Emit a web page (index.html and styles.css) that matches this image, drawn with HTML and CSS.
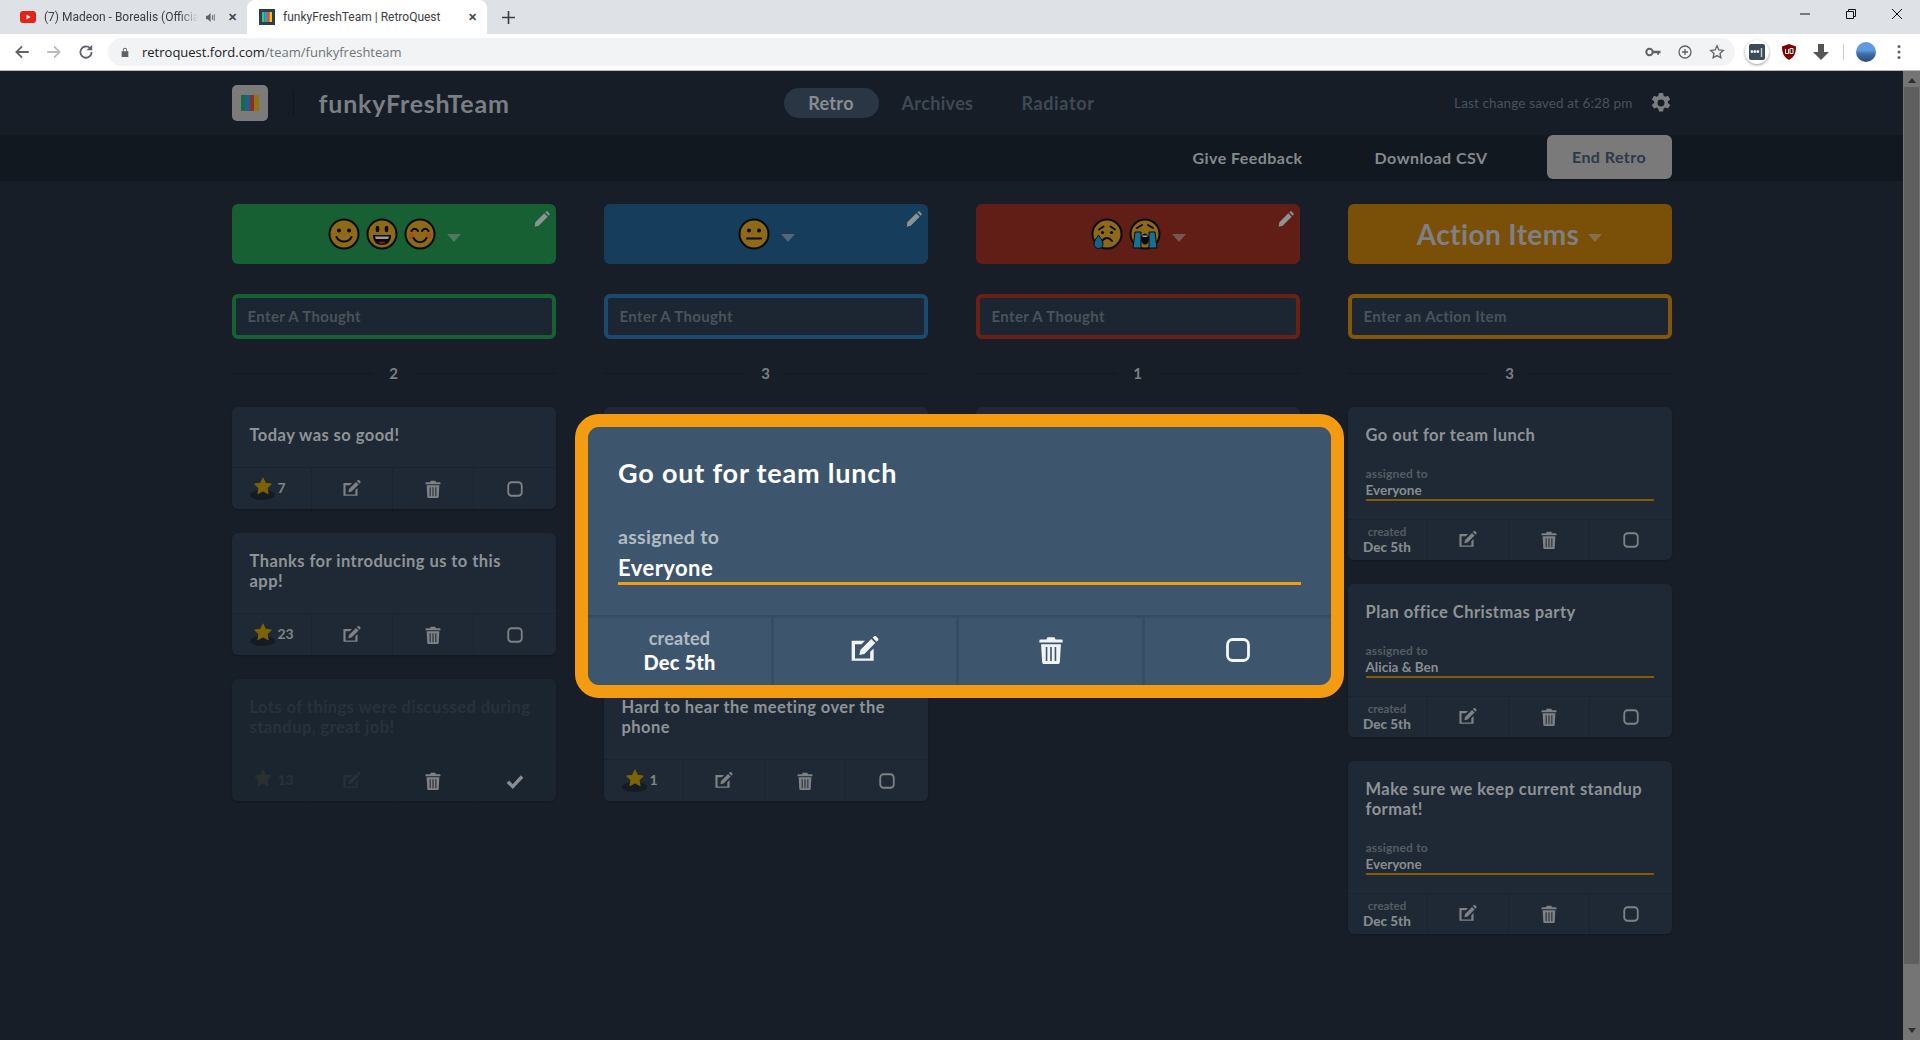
FILE: index.html
```html
<!DOCTYPE html>
<html lang="en">
<head>
<meta charset="utf-8">
<title>funkyFreshTeam | RetroQuest</title>
<link rel="stylesheet" href="styles.css">
</head>
<body>
<svg class="defs" width="0" height="0" aria-hidden="true">
  <symbol id="i-edit" viewBox="3 2 21 21"><path d="M3.500 5.500h10l-2.600 2.600H6v10.800h11.400v-5l2.600-2.600v9.200H3.500z"/><path d="M10 12.500 18.200 4.300l3 3-8.200 8.200-3.700.7zM19.200 3.300l1-1c.5-.5 1.200-.5 1.700 0l1.300 1.300c.5.500.5 1.200 0 1.700l-1 1z"/></symbol>
  <symbol id="i-trash" viewBox="0 0 24 24"><path d="M9 1h6l1 2h5a1 1 0 0 1 1 1v1.500H2V4a1 1 0 0 1 1-1h5zM3.500 7h17l-.9 15.200c0 1-.8 1.800-1.800 1.800H6.200c-1 0-1.800-.8-1.800-1.800zM7.500 9.500v12h1.400v-12zm3.800 0v12h1.400v-12zm3.800 0v12h1.400v-12z" fill-rule="evenodd"/></symbol>
  <symbol id="i-box" viewBox="0 0 24 24"><rect x="3" y="3" width="18" height="18" rx="4.500" fill="none" stroke="currentColor" stroke-width="2.400"/></symbol>
  <symbol id="i-check" viewBox="0 0 24 24"><path d="M2.500 13 9 19.500 21.500 6" fill="none" stroke="currentColor" stroke-width="4.500"/></symbol>
  <symbol id="i-star" viewBox="0 0 24 24"><path d="M12 1.500l3.300 6.900 7.500 1-5.500 5.200 1.400 7.500-6.700-3.700-6.700 3.700 1.400-7.500L1.200 9.400l7.500-1z" stroke="currentColor" stroke-width="1.500" stroke-linejoin="round"/></symbol>
  <symbol id="i-pencil" viewBox="0 0 24 24"><path d="M2 17 15.500 3.500l5 5L7 22l-6 1.500zM17 2l1.300-1.200c.6-.6 1.500-.6 2.100 0l2.800 2.800c.6.600.6 1.500 0 2.100L22 7z"/></symbol>
  <symbol id="i-gear" viewBox="0 0 24 24"><path fill-rule="evenodd" d="M9.700 1h4.600l.6 3.200 1.700 1 3.100-1.100 2.300 4-2.500 2.100v1.800l2.500 2.100-2.300 4-3.100-1.100-1.700 1-.6 3.200H9.700l-.6-3.200-1.700-1-3.100 1.100-2.300-4 2.500-2.100v-1.800L2 8.100l2.300-4 3.100 1.100 1.700-1zM12 8.200a3.800 3.800 0 1 0 0 7.600 3.800 3.800 0 0 0 0-7.600z"/></symbol>
  <symbol id="e-smile" viewBox="0 0 32 32"><circle cx="16" cy="16" r="14.500" class="face"/><circle cx="11" cy="12.500" r="2" class="ink"/><circle cx="21" cy="12.500" r="2" class="ink"/><path d="M8.500 19c3 6 12 6 15 0" class="line"/></symbol>
  <symbol id="e-grin" viewBox="0 0 32 32"><circle cx="16" cy="16" r="14.500" class="face"/><ellipse cx="11.500" cy="11" rx="1.800" ry="3.200" class="ink"/><ellipse cx="20.500" cy="11" rx="1.800" ry="3.200" class="ink"/><path d="M7 17h18c0 7-4 10-9 10s-9-3-9-10z" class="ink"/><path d="M9 18.500h14l-.8 2.500H9.800z" fill="#9a9a9a"/><path d="M12 24.500c2.500-1.500 5.500-1.500 8 0-2.500 1.500-5.500 1.500-8 0z" fill="#7d1d18"/></symbol>
  <symbol id="e-blush" viewBox="0 0 32 32"><circle cx="16" cy="16" r="14.500" class="face"/><circle cx="7.500" cy="18" r="3" fill="#a4501f"/><circle cx="24.500" cy="18" r="3" fill="#a4501f"/><path d="M7.500 13c1.500-3 5-3 6.500 0M18 13c1.500-3 5-3 6.500 0M9.500 20c3 5.500 10 5.500 13 0" class="line"/></symbol>
  <symbol id="e-neutral" viewBox="0 0 32 32"><circle cx="16" cy="16" r="14.500" class="face"/><circle cx="11" cy="12.500" r="2" class="ink"/><circle cx="21" cy="12.500" r="2" class="ink"/><path d="M9 20.500h14" class="line"/></symbol>
  <symbol id="e-sad" viewBox="0 0 32 32"><circle cx="16" cy="16" r="14.500" class="face"/><path d="M8 11.500l4.500-3M24 11.500l-4.500-3M11 23c3-4 7-4 10 0" class="line"/><circle cx="11.500" cy="14.500" r="1.600" class="ink"/><circle cx="20.500" cy="14.500" r="1.600" class="ink"/><path d="M7.500 17c-2.500 4-4.500 6-4.500 9a4.500 4.500 0 0 0 9 0c0-3-2-5-4.500-9z" fill="#17608a" stroke="#0a0a0a"/></symbol>
  <symbol id="e-cry" viewBox="0 0 32 32"><circle cx="16" cy="16" r="14.500" class="face"/><path d="M8 10l5-3M24 10l-5-3" class="line"/><path d="M6 14h6v16H4zM20 14h6l2 16h-8z" fill="#17708f" stroke="#0a0a0a"/><ellipse cx="16" cy="21" rx="4" ry="5.500" class="ink"/><path d="M13 17.500h6l-1 1.500h-4z" fill="#9a9a9a"/></symbol>
</svg>

<div class="chrome">
  <div class="tabstrip">
    <div class="tab">
      <svg class="fav" viewBox="0 0 16 16"><rect y="2" width="16" height="12" rx="3" fill="#e62117"/><path d="M6.500 5.500v5l4-2.500z" fill="#fff"/></svg>
      <span class="tab-title tab-fade">(7) Madeon - Borealis (Officia</span>
      <svg class="tab-sound" viewBox="0 0 12 12"><path d="M0 4h2l3-3v10L2 8H0z" fill="#5f6368"/><path d="M7 3.500v5M9 2.500v7" stroke="#5f6368" fill="none"/></svg>
      <span class="tab-close">✕</span>
    </div>
    <div class="tab tab-active">
      <svg class="fav" viewBox="0 0 16 16"><rect width="16" height="16" fill="#2c3e50"/><rect x="3" y="3" width="2.500" height="10" fill="#2ecc71"/><rect x="5.500" y="3" width="2.500" height="10" fill="#3498db"/><rect x="8" y="3" width="2.500" height="10" fill="#e74c3c"/><rect x="10.500" y="3" width="2.500" height="10" fill="#f1c40f"/></svg>
      <span class="tab-title">funkyFreshTeam | RetroQuest</span>
      <span class="tab-close">✕</span>
    </div>
    <svg class="tab-new" viewBox="0 0 12 12"><path d="M6 0v12M0 6h12" stroke="#3c4043" stroke-width="1.500" fill="none"/></svg>
    <div class="win-controls">
      <svg viewBox="0 0 12 12" class="win"><path d="M1 6h10" stroke="#111" fill="none"/></svg>
      <svg viewBox="0 0 12 12" class="win"><path d="M1.500 3.500h7v7h-7zM3.500 3.500v-2h7v7h-2" stroke="#111" fill="none"/></svg>
      <svg viewBox="0 0 12 12" class="win"><path d="M1 1l10 10M11 1L1 11" stroke="#111" fill="none"/></svg>
    </div>
  </div>
  <div class="toolbar">
    <svg class="tb-icon" viewBox="0 0 16 16"><path d="M14 8H3M8 3 3 8l5 5" stroke="#5f6368" stroke-width="1.600" fill="none"/></svg>
    <svg class="tb-icon" viewBox="0 0 16 16"><path d="M2 8h11M8 3l5 5-5 5" stroke="#b8babd" stroke-width="1.600" fill="none"/></svg>
    <svg class="tb-icon" viewBox="0 0 16 16"><path d="M13 8a5 5 0 1 1-1.500-3.500" stroke="#5f6368" stroke-width="1.600" fill="none"/><path d="M13.500 1.500v5h-5z" fill="#5f6368"/></svg>
    <div class="omnibox">
      <svg class="lock" viewBox="0 0 12 12"><path d="M2 5h8v7H2zM3.500 5V3.500a2.500 2.500 0 0 1 5 0V5H7.500V3.500a1.500 1.500 0 0 0-3 0V5z" fill="#5f6368"/></svg>
      <span class="url"><b>retroquest.ford.com</b>/team/funkyfreshteam</span>
      <span class="omni-right">
        <svg class="omni-icon" viewBox="0 0 16 16"><circle cx="4.500" cy="8" r="3.200" fill="none" stroke="#5f6368" stroke-width="2"/><path d="M7 6.800h8.500v2.400h-1.500v1.500h-1.800v-1.500H7z" fill="#5f6368"/></svg>
        <svg class="omni-icon" viewBox="0 0 16 16"><circle cx="8" cy="8" r="6" fill="none" stroke="#5f6368" stroke-width="1.300"/><path d="M8 5v6M5 8h6" stroke="#5f6368" stroke-width="1.300"/></svg>
        <svg class="omni-icon" viewBox="0 0 16 16"><path d="M8 1.800l1.900 4.100 4.400.5-3.300 3 .9 4.400L8 11.600l-3.900 2.200.9-4.400-3.300-3 4.400-.5z" fill="none" stroke="#5f6368" stroke-width="1.300"/></svg>
      </span>
    </div>
    <div class="extensions">
      <span class="ext-pass"><span class="ext-pass-in">•••|</span></span>
      <svg class="ext" viewBox="0 0 16 16"><path d="M8 0l7 2.500c0 6-1.500 10.500-7 13.500C2.500 13 1 8.500 1 2.500z" fill="#800000"/><path d="M4.500 5v4.500h3V5M9 4.500v5h3v-5z" stroke="#fff" fill="none"/></svg>
      <svg class="ext" viewBox="0 0 16 16"><path d="M5 0h6v8h5l-8 8-8-8h5z" fill="#555"/></svg>
      <span class="ext-sep"></span>
      <span class="avatar"></span>
      <svg class="ext ext-dots" viewBox="0 0 4 16"><circle cx="2" cy="2.500" r="1.500" fill="#5f6368"/><circle cx="2" cy="8" r="1.500" fill="#5f6368"/><circle cx="2" cy="13.500" r="1.500" fill="#5f6368"/></svg>
    </div>
  </div>
</div>

<div class="viewport">
  <div class="app">
    <header class="topbar">
      <div class="wrap topbar-in">
        <div class="brand">
          <span class="logo"><i class="b1"></i><i class="b2"></i><i class="b3"></i><i class="b4"></i></span>
          <span class="brand-sep"></span>
          <h1 class="team">funkyFreshTeam</h1>
        </div>
        <nav class="nav">
          <a class="nav-item nav-active">Retro</a>
          <a class="nav-item">Archives</a>
          <a class="nav-item">Radiator</a>
        </nav>
        <div class="saved">
          <span>Last change saved at 6:28 pm</span>
          <svg class="gear"><use href="#i-gear"/></svg>
        </div>
      </div>
    </header>
    <div class="subbar">
      <div class="wrap subbar-in">
        <a class="sub-link">Give Feedback</a>
        <a class="sub-link">Download CSV</a>
        <a class="end-retro">End Retro</a>
      </div>
    </div>

    <main class="wrap board">
      <section class="col col-green">
        <div class="col-head">
          <svg class="emoji"><use href="#e-smile"/></svg><svg class="emoji"><use href="#e-grin"/></svg><svg class="emoji"><use href="#e-blush"/></svg>
          <span class="caret"></span>
          <svg class="pencil"><use href="#i-pencil"/></svg>
        </div>
        <div class="entry">Enter A Thought</div>
        <div class="count"><span>2</span></div>
        <article class="card">
          <p class="card-text">Today was so good!</p>
          <div class="foot">
            <div class="cell cell-votes"><span class="star"><svg><use href="#i-star"/></svg></span><span class="votes">7</span></div>
            <div class="cell"><svg class="ic"><use href="#i-edit"/></svg></div>
            <div class="cell"><svg class="ic"><use href="#i-trash"/></svg></div>
            <div class="cell"><svg class="ic"><use href="#i-box"/></svg></div>
          </div>
        </article>
        <article class="card">
          <p class="card-text">Thanks for introducing us to this app!</p>
          <div class="foot">
            <div class="cell cell-votes"><span class="star"><svg><use href="#i-star"/></svg></span><span class="votes">23</span></div>
            <div class="cell"><svg class="ic"><use href="#i-edit"/></svg></div>
            <div class="cell"><svg class="ic"><use href="#i-trash"/></svg></div>
            <div class="cell"><svg class="ic"><use href="#i-box"/></svg></div>
          </div>
        </article>
        <article class="card card-done">
          <p class="card-text">Lots of things were discussed during standup, great job!</p>
          <div class="foot">
            <div class="cell cell-votes"><span class="star star-done"><svg><use href="#i-star"/></svg></span><span class="votes">13</span></div>
            <div class="cell"><svg class="ic ic-faint"><use href="#i-edit"/></svg></div>
            <div class="cell"><svg class="ic ic-live"><use href="#i-trash"/></svg></div>
            <div class="cell"><svg class="ic ic-live"><use href="#i-check"/></svg></div>
          </div>
        </article>
      </section>

      <section class="col col-blue">
        <div class="col-head">
          <svg class="emoji"><use href="#e-neutral"/></svg>
          <span class="caret"></span>
          <svg class="pencil"><use href="#i-pencil"/></svg>
        </div>
        <div class="entry">Enter A Thought</div>
        <div class="count"><span>3</span></div>
        <article class="card card-blank"></article>
        <article class="card card-blank card-blank-tall"></article>
        <article class="card">
          <p class="card-text">Hard to hear the meeting over the phone</p>
          <div class="foot">
            <div class="cell cell-votes"><span class="star"><svg><use href="#i-star"/></svg></span><span class="votes">1</span></div>
            <div class="cell"><svg class="ic"><use href="#i-edit"/></svg></div>
            <div class="cell"><svg class="ic"><use href="#i-trash"/></svg></div>
            <div class="cell"><svg class="ic"><use href="#i-box"/></svg></div>
          </div>
        </article>
      </section>

      <section class="col col-red">
        <div class="col-head">
          <svg class="emoji"><use href="#e-sad"/></svg><svg class="emoji"><use href="#e-cry"/></svg>
          <span class="caret"></span>
          <svg class="pencil"><use href="#i-pencil"/></svg>
        </div>
        <div class="entry">Enter A Thought</div>
        <div class="count"><span>1</span></div>
        <article class="card card-blank"></article>
      </section>

      <section class="col col-orange">
        <div class="col-head col-head-text">
          <span class="col-title">Action Items</span>
          <span class="caret"></span>
        </div>
        <div class="entry">Enter an Action Item</div>
        <div class="count"><span>3</span></div>
        <article class="card action">
          <div class="action-body">
            <p class="action-text">Go out for team lunch</p>
            <div class="assign-label">assigned to</div>
            <div class="assign-name">Everyone</div>
          </div>
          <div class="foot foot-action">
            <div class="cell created"><span>created</span><b>Dec 5th</b></div>
            <div class="cell"><svg class="ic"><use href="#i-edit"/></svg></div>
            <div class="cell"><svg class="ic"><use href="#i-trash"/></svg></div>
            <div class="cell"><svg class="ic"><use href="#i-box"/></svg></div>
          </div>
        </article>
        <article class="card action">
          <div class="action-body">
            <p class="action-text">Plan office Christmas party</p>
            <div class="assign-label">assigned to</div>
            <div class="assign-name">Alicia &amp; Ben</div>
          </div>
          <div class="foot foot-action">
            <div class="cell created"><span>created</span><b>Dec 5th</b></div>
            <div class="cell"><svg class="ic"><use href="#i-edit"/></svg></div>
            <div class="cell"><svg class="ic"><use href="#i-trash"/></svg></div>
            <div class="cell"><svg class="ic"><use href="#i-box"/></svg></div>
          </div>
        </article>
        <article class="card action">
          <div class="action-body">
            <p class="action-text">Make sure we keep current standup format!</p>
            <div class="assign-label">assigned to</div>
            <div class="assign-name">Everyone</div>
          </div>
          <div class="foot foot-action">
            <div class="cell created"><span>created</span><b>Dec 5th</b></div>
            <div class="cell"><svg class="ic"><use href="#i-edit"/></svg></div>
            <div class="cell"><svg class="ic"><use href="#i-trash"/></svg></div>
            <div class="cell"><svg class="ic"><use href="#i-box"/></svg></div>
          </div>
        </article>
      </section>
    </main>
  </div>

  <div class="scrollbar">
    <span class="arrow arrow-up"></span>
    <span class="thumb"></span>
    <span class="arrow arrow-down"></span>
  </div>

  <div class="modal">
    <div class="modal-body">
      <p class="modal-text">Go out for team lunch</p>
      <div class="modal-label">assigned to</div>
      <div class="modal-name">Everyone</div>
    </div>
    <div class="modal-foot">
      <div class="modal-cell modal-created"><span>created</span><b>Dec 5th</b></div>
      <div class="modal-cell"><svg class="modal-ic"><use href="#i-edit"/></svg></div>
      <div class="modal-cell"><svg class="modal-ic"><use href="#i-trash"/></svg></div>
      <div class="modal-cell"><svg class="modal-ic"><use href="#i-box"/></svg></div>
    </div>
  </div>
</div>
</body>
</html>
```
FILE: styles.css
```css
* { box-sizing: border-box; }
html, body { margin: 0; height: 100%; overflow: hidden; }
body {
  display: flex;
  flex-direction: column;
  font-family: "Lato", "Noto Sans", sans-serif;
  background: #171e28;
}
p, h1 { margin: 0; }
.defs { position: absolute; }
.face { fill: #8e6a18; stroke: #0a0a0a; stroke-width: 2; }
.ink { fill: #0a0a0a; }
.line { fill: none; stroke: #0a0a0a; stroke-width: 2; stroke-linecap: round; }

/* browser chrome */
.chrome { flex: none; font-family: "Open Sans", "Noto Sans", sans-serif; }
.tabstrip {
  height: 34px;
  background: #dee1e6;
  display: flex;
  align-items: flex-end;
  padding-left: 8px;
}
.tab {
  width: 239px;
  height: 34px;
  display: flex;
  align-items: center;
  padding-left: 12px;
  gap: 8px;
  font-family: "Roboto", sans-serif;
  font-size: 12px;
  color: #3c4043;
}
.tab-active {
  width: 240px;
  background: #fff;
  border-radius: 8px 8px 0 0;
}
.fav { width: 16px; height: 16px; flex: none; }
.tab-title { white-space: nowrap; flex: 1; min-width: 0; }
.tab-fade { -webkit-mask-image: linear-gradient(90deg, #000 88%, transparent); mask-image: linear-gradient(90deg, #000 88%, transparent); }
.tab-sound { width: 11px; height: 11px; flex: none; margin: 0 -1px 0 0; }
.tab-close { width: 16px; font-size: 11px; font-weight: 700; text-align: center; color: #44474a; margin-right: 7px; flex: none; }
.tab-new { width: 13px; height: 13px; margin: 0 0 10px 15px; flex: none; }
.win-controls { margin-left: auto; height: 28px; align-self: flex-start; display: flex; }
.win { width: 46px; height: 12px; margin-top: 8px; padding: 0; }

.toolbar {
  height: 37px;
  background: #fff;
  border-bottom: 1px solid #b8b8b8;
  display: flex;
  align-items: center;
  padding-left: 13px;
  padding-bottom: 1px;
}
.tb-icon { width: 18px; height: 18px; flex: none; margin-right: 14px; }
.tb-icon + .tb-icon + .tb-icon { margin-right: 13px; }
.omnibox {
  width: 1627px;
  height: 28px;
  border-radius: 14px;
  background: #f1f3f4;
  display: flex;
  align-items: center;
  padding-left: 12px;
  font-size: 13px;
  color: #70757a;
  flex: none;
}
.lock { width: 10px; height: 12px; margin-right: 12px; flex: none; }
.url b { font-weight: 400; color: #202124; }
.omni-right { margin-left: auto; display: flex; gap: 16px; padding-right: 10px; }
.omni-icon { width: 16px; height: 16px; }
.extensions { display: flex; align-items: center; margin-left: 10px; }
.ext-pass { width: 24px; height: 24px; border-radius: 50%; background: #fff; box-shadow: 0 1px 3px #0006; display: flex; align-items: center; justify-content: center; margin-right: 12px; }
.ext-pass-in { width: 16px; height: 16px; border-radius: 2px; background: #3d4b59; color: #fff; font-size: 8px; line-height: 16px; text-align: center; overflow: hidden; font-weight: 700; }
.ext { width: 16px; height: 16px; margin-right: 16px; }
.ext-sep { width: 1px; height: 16px; background: #ccc; margin-left: -2px; margin-right: 12px; }
.avatar { width: 20px; height: 20px; border-radius: 50%; background: linear-gradient(180deg, #5e9be0 0 40%, #3e6ea8 60%, #2c4a78); margin-right: 20px; flex: none; }
.ext-dots { width: 6px; margin-right: 0; }

/* page */
.viewport { flex: 1; min-height: 0; display: flex; position: relative; }
.app { flex: 1; min-width: 0; overflow: hidden; background: #171e28; }
.wrap { width: 1440px; margin: 0 auto; }
.topbar { height: 64px; background: #161d27; }
.topbar-in { height: 100%; display: flex; align-items: center; position: relative; }
.brand { display: flex; align-items: center; }
.logo {
  width: 36px; height: 36px;
  background: #7b7b7b;
  border-radius: 5px;
  display: flex;
  align-items: center;
  justify-content: center;
}
.logo i { width: 4.500px; height: 16px; display: block; }
.b1 { background: #176b42; }
.b2 { background: #1d5f88; }
.b3 { background: #8a3026; }
.b4 { background: #8f7410; }
.brand-sep { width: 1px; height: 24px; background: #10151c; margin: 0 25px; }
.team { font-size: 25px; font-weight: 700; color: #7a7f85; letter-spacing: .8px; }
.nav { position: absolute; left: 552px; top: 17px; display: flex; align-items: center; font-size: 18px; font-weight: 700; color: #3f4954; letter-spacing: .35px; }
.nav-item { height: 30px; line-height: 30px; padding: 0 24px; }
.nav-active { background: #2a3644; color: #888d93; border-radius: 15px; width: 95px; padding: 0; text-align: center; }
.nav-item:nth-child(2) { padding: 0 24px 0 23px; }
.nav-item:nth-child(3) { padding: 0 0 0 24px; letter-spacing: .65px; }
.saved { margin-left: auto; display: flex; align-items: center; color: #4b5159; font-size: 13.500px; letter-spacing: .13px; }
.gear { width: 22px; height: 22px; margin-left: 17px; fill: #7c7f82; }

.subbar { height: 46px; background: #11181f; }
.subbar-in { height: 44px; display: flex; align-items: center; justify-content: flex-end; color: #85898e; font-size: 16px; font-weight: 700; letter-spacing: .45px; }
.sub-link { margin-right: 72px; }
.sub-link + .sub-link { margin-right: 59px; }
.end-retro { width: 125px; height: 44px; line-height: 44px; text-align: center; background: #7a7a7a; color: #2d3947; border-radius: 6px; }

.board { display: grid; grid-template-columns: repeat(4, 324px); column-gap: 48px; padding-top: 23px; align-items: start; }
.col { display: flex; flex-direction: column; gap: 24px; }
.col-head {
  height: 60px;
  border-radius: 6px;
  display: flex;
  align-items: center;
  justify-content: center;
  gap: 6px;
  padding-left: 2px;
  position: relative;
}
.col-green .col-head { background: #166033; }
.col-blue .col-head { background: #163e5c; }
.col-red .col-head { background: #601e16; }
.col-orange .col-head { background: #7a4f08; }
.emoji { width: 32px; height: 32px; flex: none; }
.caret { width: 0; height: 0; border: 7px solid transparent; border-top: 8px solid #8f8f8f80; border-bottom: 0; margin-left: 5px; margin-top: 8px; }
.pencil { width: 16px; height: 18px; position: absolute; right: 6px; top: 6px; fill: #8b9490; }
.col-title { font-size: 28px; font-weight: 700; color: #7f8084; letter-spacing: .4px; }
.col-head-text { gap: 0; padding-left: 0; }
.col-head-text .caret { margin-left: 9px; }
.entry {
  height: 45px;
  margin-top: 6px;
  border: 4px solid;
  border-radius: 6px;
  background: #1c2632;
  padding-left: 12px;
  line-height: 37px;
  font-size: 15px;
  font-weight: 700;
  color: #4a525b;
  letter-spacing: .35px;
}
.col-green .entry { border-color: #166033; }
.col-blue .entry { border-color: #1a4a6e; }
.col-red .entry { border-color: #6b2015; }
.col-orange .entry { border-color: #835709; }
.count {
  height: 20px;
  display: flex;
  align-items: center;
  gap: 16px;
  color: #7a8086;
  font-size: 15px;
  font-weight: 700;
}
.count::before, .count::after { content: ""; flex: 1; height: 1px; background: #11181f; }

.card { background: #1e2935; border-radius: 6px; box-shadow: 0 1px 2px #0003; }
.card-blank { height: 102px; }
.card-blank-tall { height: 122px; }
.card-text { padding: 18px 18px 22px; font-size: 16.500px; line-height: 20px; font-weight: 700; color: #8f9397; letter-spacing: .45px; }
.foot { height: 42px; display: grid; grid-template-columns: 80px 81px 81px 1fr; border-top: 1px solid #1a2430; }
.foot-action { height: 41px; }
.cell { display: flex; align-items: center; justify-content: center; border-right: 1px solid #1a2430; color: #7f8285; }
.cell:last-child { border-right: 0; }
.cell-votes { justify-content: flex-start; padding-left: 18px; }
.ic { width: 18px; height: 18px; fill: #7f8285; color: #7f8285; }
.star { width: 24px; height: 24px; position: relative; margin-right: 4px; flex: none; }
.star::before { content: ""; position: absolute; left: 0; top: 13px; width: 25px; height: 10px; border-radius: 50%; background: #141b25; }
.star svg { position: absolute; left: 4px; top: 0; width: 18px; height: 18px; fill: #7d6206; color: #7d6206; }
.votes { font-size: 14px; font-weight: 700; color: #7f8589; margin-top: -2px; }
.card-done { background: #1b2530; }
.card-done .card-text { color: #27313c; }
.card-done .votes { color: #27313c; }
.star-done::before { display: none; }
.star-done svg { fill: #2a3030; color: #2a3030; }
.ic-faint { fill: #27313c; color: #27313c; }
.ic-live { fill: #808285; color: #8b8c8d; }

.action-body { padding: 18px; }
.action-text { font-size: 16.500px; line-height: 20px; font-weight: 700; color: #8f9397; margin-bottom: 21px; letter-spacing: .45px; }
.assign-label { font-size: 12px; line-height: 16px; font-weight: 700; color: #555c63; letter-spacing: .2px; }
.assign-name { font-size: 13.500px; line-height: 17px; font-weight: 700; color: #898d91; border-bottom: 2px solid #855a0a; }
.created { flex-direction: column; font-size: 11.500px; line-height: 14px; font-weight: 700; color: #555c63; }
.created b { font-size: 13.500px; line-height: 16px; color: #85898d; }

/* focused item */
.modal {
  position: absolute;
  left: 575px;
  top: 343px;
  width: 769px;
  height: 284px;
  border: 13px solid #f39c12;
  border-radius: 24px;
  background: #3d566e;
  display: flex;
  flex-direction: column;
  color: #fff;
}
.modal-body { flex: 1; padding: 30px 30px 0; }
.modal-text { font-size: 27px; line-height: 32px; font-weight: 700; margin-bottom: 36px; letter-spacing: .8px; }
.modal-label { font-size: 19.500px; line-height: 24px; font-weight: 700; color: #b1bbc5; margin-bottom: 6px; letter-spacing: .3px; }
.modal-name { font-size: 22px; line-height: 26px; font-weight: 700; border-bottom: 3px solid #f39c12; padding-bottom: 1px; letter-spacing: .45px; }
.modal-foot { height: 70px; display: grid; grid-template-columns: 186px 185px 186px 1fr; border-top: 3px solid #364d63; }
.modal-cell { display: flex; align-items: center; justify-content: center; border-right: 3px solid #364d63; padding-bottom: 3px; }
.modal-cell:last-child { border-right: 0; }
.modal-ic { width: 28px; height: 28px; fill: #f2f5f7; color: #f2f5f7; }
.modal-created { flex-direction: column; font-size: 18px; line-height: 24px; font-weight: 700; color: #b1bbc5; letter-spacing: .2px; }
.modal-created b { font-size: 20px; color: #fff; }

/* page scrollbar under the dim layer */
.scrollbar { width: 17px; flex: none; background: #757575; display: flex; flex-direction: column; align-items: center; }
.thumb { width: 15px; height: 877px; background: #5f5f5f; margin-top: 4px; }
.arrow { width: 0; height: 0; border: 4px solid transparent; flex: none; }
.arrow-up { border-bottom: 5px solid #2f2f2f; border-top: 0; margin-top: 7px; }
.arrow-down { border-top: 5px solid #2f2f2f; border-bottom: 0; margin-top: auto; margin-bottom: 7px; }
```
